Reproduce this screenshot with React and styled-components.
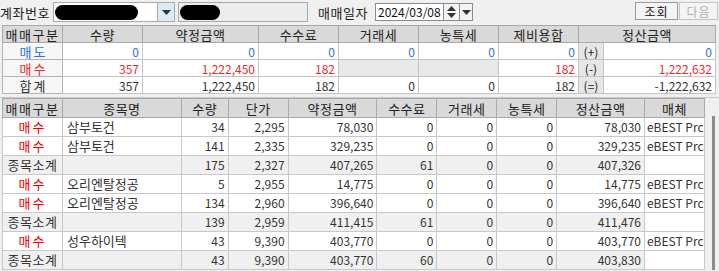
import styled, { createGlobalStyle } from 'styled-components';

const GlobalStyle = createGlobalStyle`
  body {
    margin: 0;
    background: #f0f0f0;
    font-family: "Noto Sans CJK KR", "Noto Sans", sans-serif;
    font-size: 12px;
    color: #222;
  }
  table {
    font-family: "Noto Sans CJK KR", "Noto Sans", sans-serif;
    font-size: 12px;
  }
`

const summaryRows = [
  {label: '매도', tone: 'blue', qty: '0', amt: '0', fee: '0', tax: '0', farm: '0', cost: '0', sign: '(+)', net: '0'},
  {label: '매수', tone: 'red', qty: '357', amt: '1,222,450', fee: '182', tax: null, farm: null, cost: '182', sign: '(-)', net: '1,222,632'},
  {label: '합계', tone: 'dark', qty: '357', amt: '1,222,450', fee: '182', tax: '0', farm: '0', cost: '182', sign: '(=)', net: '-1,222,632'},
]

const detailRows = [
  {kind: '매수', name: '삼부토건', qty: '34', price: '2,295', amt: '78,030', fee: '0', net: '78,030', media: 'eBEST Prc'},
  {kind: '매수', name: '삼부토건', qty: '141', price: '2,335', amt: '329,235', fee: '0', net: '329,235', media: 'eBEST Prc'},
  {kind: '종목소계', sub: true, name: '', qty: '175', price: '2,327', amt: '407,265', fee: '61', net: '407,326', media: ''},
  {kind: '매수', name: '오리엔탈정공', qty: '5', price: '2,955', amt: '14,775', fee: '0', net: '14,775', media: 'eBEST Prc'},
  {kind: '매수', name: '오리엔탈정공', qty: '134', price: '2,960', amt: '396,640', fee: '0', net: '396,640', media: 'eBEST Prc'},
  {kind: '종목소계', sub: true, name: '', qty: '139', price: '2,959', amt: '411,415', fee: '61', net: '411,476', media: ''},
  {kind: '매수', name: '성우하이텍', qty: '43', price: '9,390', amt: '403,770', fee: '0', net: '403,770', media: 'eBEST Prc'},
  {kind: '종목소계', sub: true, name: '', qty: '43', price: '9,390', amt: '403,770', fee: '60', net: '403,830', media: ''},
]

const Down = () => (
  <svg width="9" height="5" viewBox="0 0 9 5"><path d="M0 0h9L4.5 5z" fill="#333" /></svg>
)
const Up = () => (
  <svg width="9" height="5" viewBox="0 0 9 5"><path d="M0 5h9L4.5 0z" fill="#333" /></svg>
)

export default function App() {
  return <Screen>
    <GlobalStyle />
    <TopBar>
      <FieldLabel>계좌번호</FieldLabel>
      <AccountBox><Blob $w={83} /></AccountBox>
      <DropBtn><Down /></DropBtn>
      <NameBox><Blob $w={40} /></NameBox>
      <FieldLabel $gap={10}>매매일자</FieldLabel>
      <DateBox>2024/03/08</DateBox>
      <Spin><Up /><Down /></Spin>
      <DateDrop><Down /></DateDrop>
      <Spacer />
      <Button>조회</Button>
      <Button $disabled>다음</Button>
    </TopBar>

    <Table>
      <colgroup>
        {[60, 80, 116, 80, 80, 80, 80, 25, 112].map((w, i) => <col key={i} style={{width: w}} />)}
      </colgroup>
      <thead>
        <SumHead>
          <Th $spaced>매매구분</Th>
          <Th>수량</Th>
          <Th>약정금액</Th>
          <Th>수수료</Th>
          <Th>거래세</Th>
          <Th>농특세</Th>
          <Th>제비용합</Th>
          <Th colSpan={2}>정산금액</Th>
        </SumHead>
      </thead>
      <tbody>
        {summaryRows.map((r) => (
          <SumRow key={r.label}>
            <LabelCell $tone={r.tone}>{r.label}</LabelCell>
            <Num $tone={r.tone}>{r.qty}</Num>
            <Num $tone={r.tone}>{r.amt}</Num>
            <Num $tone={r.tone}>{r.fee}</Num>
            <Num $tone={r.tone} $blank={r.tax === null}>{r.tax}</Num>
            <Num $tone={r.tone} $blank={r.farm === null}>{r.farm}</Num>
            <Num $tone={r.tone}>{r.cost}</Num>
            <SignCell>{r.sign}</SignCell>
            <Num $tone={r.tone}>{r.net}</Num>
          </SumRow>
        ))}
      </tbody>
    </Table>

    <DetailWrap>
      <Table>
        <colgroup>
          {[60, 119, 47, 60, 89, 60, 60, 60, 88, 60].map((w, i) => <col key={i} style={{width: w}} />)}
        </colgroup>
        <thead>
          <DetailHead>
            <Th $spaced>매매구분</Th>
            <Th>종목명</Th>
            <Th>수량</Th>
            <Th>단가</Th>
            <Th>약정금액</Th>
            <Th>수수료</Th>
            <Th>거래세</Th>
            <Th>농특세</Th>
            <Th>정산금액</Th>
            <Th>매체</Th>
          </DetailHead>
        </thead>
        <tbody>
          {detailRows.map((r, i) => (
            <DetailRow key={i} $sub={r.sub}>
              <KindCell $sub={r.sub}>{r.kind}</KindCell>
              <NameCell>{r.name}</NameCell>
              <DNum>{r.qty}</DNum>
              <DNum>{r.price}</DNum>
              <DNum>{r.amt}</DNum>
              <DNum>{r.fee}</DNum>
              <DNum>0</DNum>
              <DNum>0</DNum>
              <DNum>{r.net}</DNum>
              <MediaCell>{r.media}</MediaCell>
            </DetailRow>
          ))}
        </tbody>
      </Table>
      <ScrollBar><Thumb /></ScrollBar>
    </DetailWrap>
  </Screen>
}

const Screen = styled.div`
  width: 719px;
  height: 271px;
  overflow: hidden;
`
const TopBar = styled.div`
  display: flex;
  align-items: center;
  height: 25px;
  padding-bottom: 1px;
  box-sizing: border-box;
`
const FieldLabel = styled.span`
  font-size: 13px;
  color: #222;
  margin-left: ${p => p.$gap || 0}px;
  width: 53px;
  letter-spacing: 0.5px;
  flex-shrink: 0;
`
const AccountBox = styled.div`
  width: 105px;
  height: 20px;
  box-sizing: border-box;
  background: #fff;
  border: 1px solid #a8a8a8;
  display: flex;
  align-items: center;
  padding-left: 1px;
`
const Blob = styled.span`
  display: block;
  width: ${p => p.$w}px;
  height: 15px;
  background: #000;
  border-radius: 8px;
`
const DropBtn = styled.div`
  width: 17px;
  height: 20px;
  box-sizing: border-box;
  background: #dcebf8;
  border: 1px solid #a8a8a8;
  border-left: none;
  display: flex;
  align-items: center;
  justify-content: center;
`
const NameBox = styled.div`
  margin-left: 3px;
  width: 130px;
  height: 20px;
  box-sizing: border-box;
  background: #ececec;
  border: 1px solid #a8a8a8;
  display: flex;
  align-items: center;
  padding-left: 1px;
`
const DateBox = styled.div`
  margin-left: 4px;
  width: 69px;
  height: 18px;
  box-sizing: border-box;
  background: #fff;
  border: 1px solid #8a8a8a;
  font-size: 12px;
  line-height: 16px;
  padding-left: 2px;
  color: #111;
`
const Spin = styled.div`
  width: 16px;
  height: 18px;
  box-sizing: border-box;
  background: #f4f4f4;
  border: 1px solid #8a8a8a;
  border-left: none;
  display: flex;
  flex-direction: column;
  align-items: center;
  justify-content: center;
  gap: 2px;
`
const DateDrop = styled(Spin)`
  width: 13px;
`
const Spacer = styled.div`
  flex: 1;
`
const Button = styled.div`
  width: ${p => p.$disabled ? 39 : 43}px;
  height: 18px;
  box-sizing: border-box;
  margin-right: 1px;
  margin-top: -2px;
  border: 1px solid ${p => p.$disabled ? '#c4c4c4' : '#9a9a9a'};
  background: #f4f4f4;
  color: ${p => p.$disabled ? '#b0b0b0' : '#111'};
  display: flex;
  align-items: center;
  justify-content: center;
  font-size: 12px;
  letter-spacing: 1px;
`
const Table = styled.table`
  margin-left: 2px;
  border-collapse: collapse;
  table-layout: fixed;
  border: 1px solid #a8a8a8;
  background: #fff;
  align-self: flex-start;
  td, th {
    vertical-align: middle;
    overflow: hidden;
    white-space: nowrap;
  }
`
const SumHead = styled.tr`
  height: 17px;
`
const Th = styled.th`
  padding: 0;
  background: #d9d9d9;
  border: 1px solid #a8a8a8;
  font-weight: normal;
  font-size: 13px;
  line-height: 15px;
  color: #222;
  text-align: center;
  letter-spacing: ${p => p.$spaced ? '1.5px' : '0.5px'};
`
const SumRow = styled.tr`
  height: 17px;
`
const toneColor = {blue: '#2a72dc', red: '#dc2f2f', dark: '#333'}
const LabelCell = styled.td`
  padding: 0 0 0 2px;
  border: 1px solid #b4b4b4;
  background: #f6f6f6;
  text-align: center;
  font-size: 13px;
  line-height: 15px;
  letter-spacing: 2px;
  color: ${p => toneColor[p.$tone]};
`
const Num = styled.td`
  padding: 0 3px 0 0;
  border: 1px solid #c4c4c4;
  text-align: right;
  line-height: 15px;
  color: ${p => toneColor[p.$tone]};
  background: ${p => p.$blank ? '#e8e8e8' : '#fff'};
`
const SignCell = styled.td`
  padding: 0;
  border: 1px solid #c4c4c4;
  background: #e6e6e6;
  text-align: center;
  color: #222;
  line-height: 15px;
`
const DetailWrap = styled.div`
  display: flex;
  align-items: stretch;
  margin-top: 3px;
  border-top: 1px solid #c8c8c8;
`
const DetailHead = styled.tr`
  height: 19px;
`
const DetailRow = styled.tr`
  height: 19px;
  background: ${p => p.$sub ? '#f0f0f0' : '#fff'};
`
const KindCell = styled.td`
  padding: 0;
  border: 1px solid #c8c8c8;
  text-align: center;
  font-size: 13px;
  letter-spacing: ${p => p.$sub ? '0.5px' : '2px'};
  color: ${p => p.$sub ? '#333' : '#f00000'};
  line-height: 16px;
`
const NameCell = styled.td`
  padding: 0 0 0 4px;
  border: 1px solid #c8c8c8;
  font-size: 13px;
  color: #333;
  line-height: 16px;
`
const DNum = styled.td`
  padding: 0 3px 0 0;
  border: 1px solid #c8c8c8;
  text-align: right;
  color: #333;
  line-height: 16px;
`
const MediaCell = styled.td`
  padding: 0 0 0 2px;
  border: 1px solid #c8c8c8;
  background: #fff;
  color: #333;
  line-height: 16px;
`
const ScrollBar = styled.div`
  width: 14px;
  background: #f0f0f0;
  display: flex;
  justify-content: flex-end;
  padding: 18px 4px 0 0;
  box-sizing: border-box;
`
const Thumb = styled.div`
  width: 3px;
  background: #8c8c8c;
`
